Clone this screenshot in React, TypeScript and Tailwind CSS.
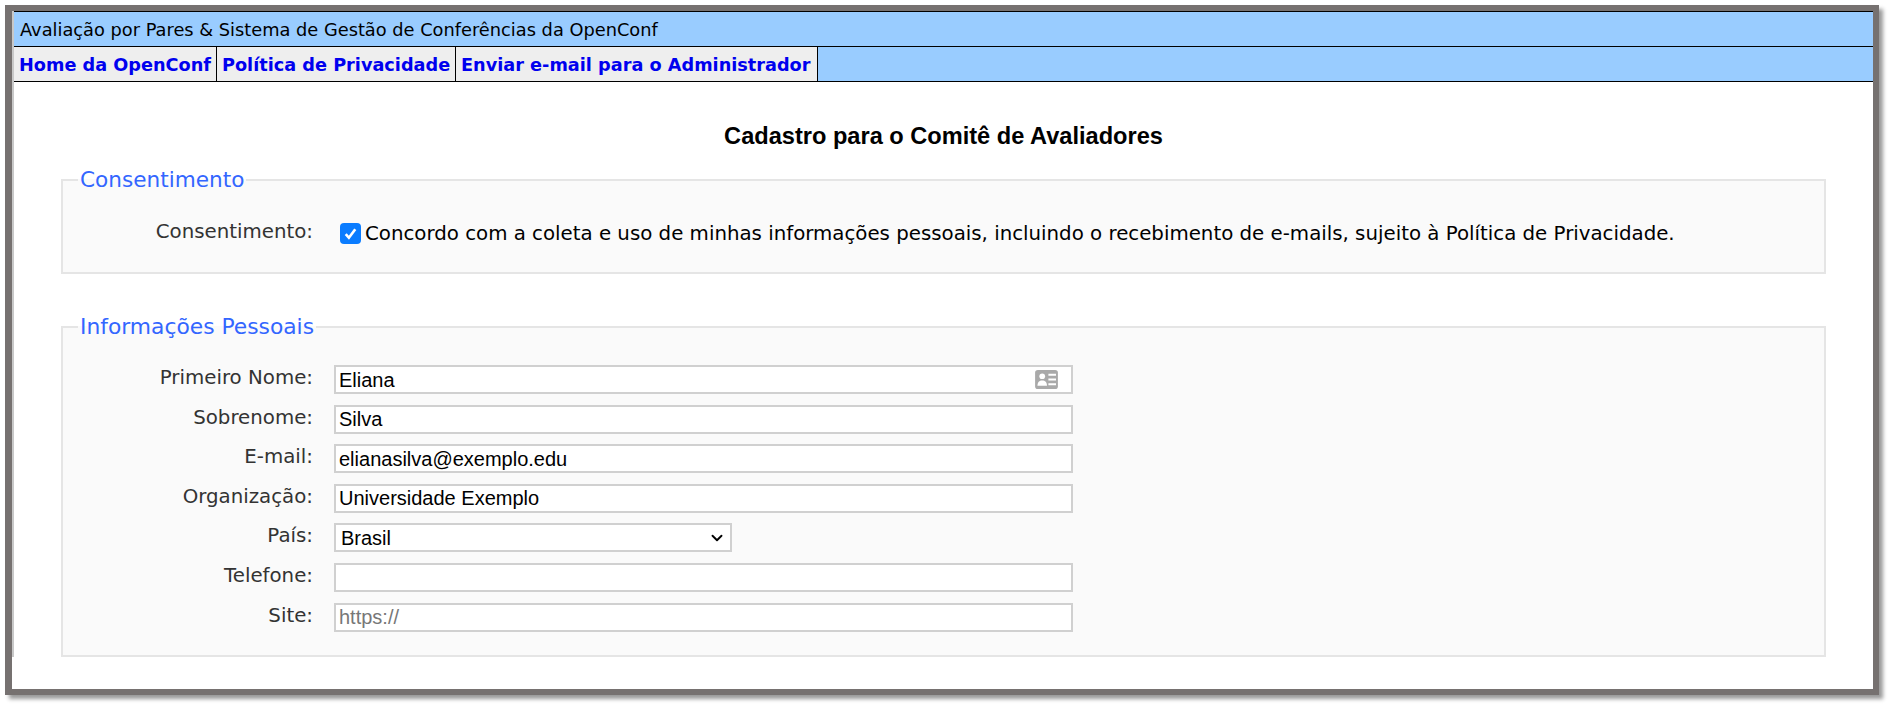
import { ChevronDown } from "lucide-react";

const verdana = "font-['DejaVu_Sans',Verdana,sans-serif]";
const arial = "font-['Liberation_Sans',Arial,sans-serif]";

const navLinks = [
  { label: "Home da OpenConf", width: "w-[203px]" },
  { label: "Política de Privacidade", width: "w-[239px]" },
  { label: "Enviar e-mail para o Administrador", width: "w-[362px]" },
];

function ContactIcon() {
  return (
    <svg viewBox="0 0 24 20" className="h-[19px] w-[23px]" aria-hidden="true">
      <rect width="24" height="20" rx="3" fill="#a9a9a9" />
      <circle cx="7.500" cy="6.600" r="3" fill="#fff" />
      <path d="M2.500 16.500c0-3.800 2-5.500 5-5.500s5 1.700 5 5.500z" fill="#fff" />
      <path d="M14 4h8v2h-8zM14 9h8v2h-8zM14 14h8v2h-8z" fill="#fff" />
    </svg>
  );
}

function Field({ label, children }: { label: string; children: React.ReactNode }) {
  return (
    <div className="flex h-[29px] items-start">
      <label className={`${verdana} mt-[1px] w-[250px] text-right text-[19.800px] leading-[24px] text-[#333]`}>
        {label}
      </label>
      <div className="ml-[21px]">{children}</div>
    </div>
  );
}

function TextInput({ value, placeholder }: { value?: string; placeholder?: string }) {
  return (
    <input
      readOnly
      value={value}
      placeholder={placeholder}
      className={`${arial} h-[29px] w-[739px] border-2 border-[#d0d0d0] bg-white px-[3px] text-[20px] text-black outline-none placeholder:text-[#777]`}
    />
  );
}

export default function App() {
  return (
    <div className="h-[708px] w-[1892px] overflow-hidden bg-white pl-[5px] pt-[5px]">
      <div className="h-[690px] w-[1874px] border-y-[6px] border-r-[6px] border-l-[7px] border-[#767170] bg-white shadow-[4px_4px_4px_rgba(0,0,0,0.4)]">
        <div className="border-l-[2px] border-[#c8c8c8]">
          {/* Header */}
          <div className="border-y border-black bg-[#99ccff]">
            <div className={`${verdana} h-[34px] pl-[6px] text-[17.800px] leading-[35px] text-black`}>
              Avaliação por Pares &amp; Sistema de Gestão de Conferências da OpenConf
            </div>
            <div className="flex h-[35px] border-t border-black">
              {navLinks.map((l) => (
                <a
                  key={l.label}
                  href="#"
                  className={`${verdana} ${l.width} border-r border-black bg-[#eeeeee] pl-[5px] text-[17.700px] font-bold leading-[36px] text-[#0000ee]`}
                >
                  {l.label}
                </a>
              ))}
            </div>
          </div>

          <div className="pl-[47px] pr-[47px]">
            <h1 className={`${arial} mt-[38px] text-center text-[23.600px] font-bold leading-[32px] text-black`}>
              Cadastro para o Comitê de Avaliadores
            </h1>

            {/* Consentimento */}
            <fieldset className="mt-[15px] h-[107px] border-2 border-[#e5e5e5] bg-[#fafafa]">
              <legend className={`${verdana} ml-[15px] px-[2px] text-[21.600px] leading-[26px] text-[#3366ff]`}>
                Consentimento
              </legend>
              <div className="mt-[27px] flex items-start">
                <label className={`${verdana} w-[250px] text-right text-[19.800px] leading-[24px] text-[#333]`}>
                  Consentimento:
                </label>
                <span className="ml-[27px] mt-[3px] flex h-[21px] w-[21px] items-center justify-center rounded-[4px] bg-[#0a7cff]">
                  <svg viewBox="0 0 16 16" className="h-[17px] w-[17px]" aria-hidden="true">
                    <path d="M3.500 8.500l3 3.500 6-8" fill="none" stroke="#fff" strokeWidth="2.500" />
                  </svg>
                </span>
                <span className={`${verdana} ml-[4px] text-[19.800px] leading-[28px] text-black`}>
                  Concordo com a coleta e uso de minhas informações pessoais, incluindo o recebimento de e-mails, sujeito à Política de Privacidade.
                </span>
              </div>
            </fieldset>

            {/* Informações Pessoais */}
            <fieldset className="mt-[40px] h-[343px] border-2 border-[#e5e5e5] bg-[#fafafa]">
              <legend className={`${verdana} ml-[15px] px-[2px] text-[21.800px] leading-[26px] text-[#3366ff]`}>
                Informações Pessoais
              </legend>
              <div className="mt-[25px] flex flex-col gap-[10.600px]">
                <Field label="Primeiro Nome:">
                  <div className="relative">
                    <TextInput value="Eliana" />
                    <span className="absolute right-[15px] top-[5px]">
                      <ContactIcon />
                    </span>
                  </div>
                </Field>
                <Field label="Sobrenome:">
                  <TextInput value="Silva" />
                </Field>
                <Field label="E-mail:">
                  <TextInput value="elianasilva@exemplo.edu" />
                </Field>
                <Field label="Organização:">
                  <TextInput value="Universidade Exemplo" />
                </Field>
                <Field label="País:">
                  <div className={`${arial} flex h-[29px] w-[398px] items-center justify-between border-2 border-[#d0d0d0] bg-white pl-[5px] pr-[4px] text-[20px] text-black`}>
                    <span>Brasil</span>
                    <ChevronDown className="h-[18px] w-[18px]" strokeWidth={2.5} />
                  </div>
                </Field>
                <Field label="Telefone:">
                  <TextInput value="" />
                </Field>
                <Field label="Site:">
                  <TextInput placeholder="https://" />
                </Field>
              </div>
            </fieldset>
          </div>
        </div>
      </div>
    </div>
  );
}
